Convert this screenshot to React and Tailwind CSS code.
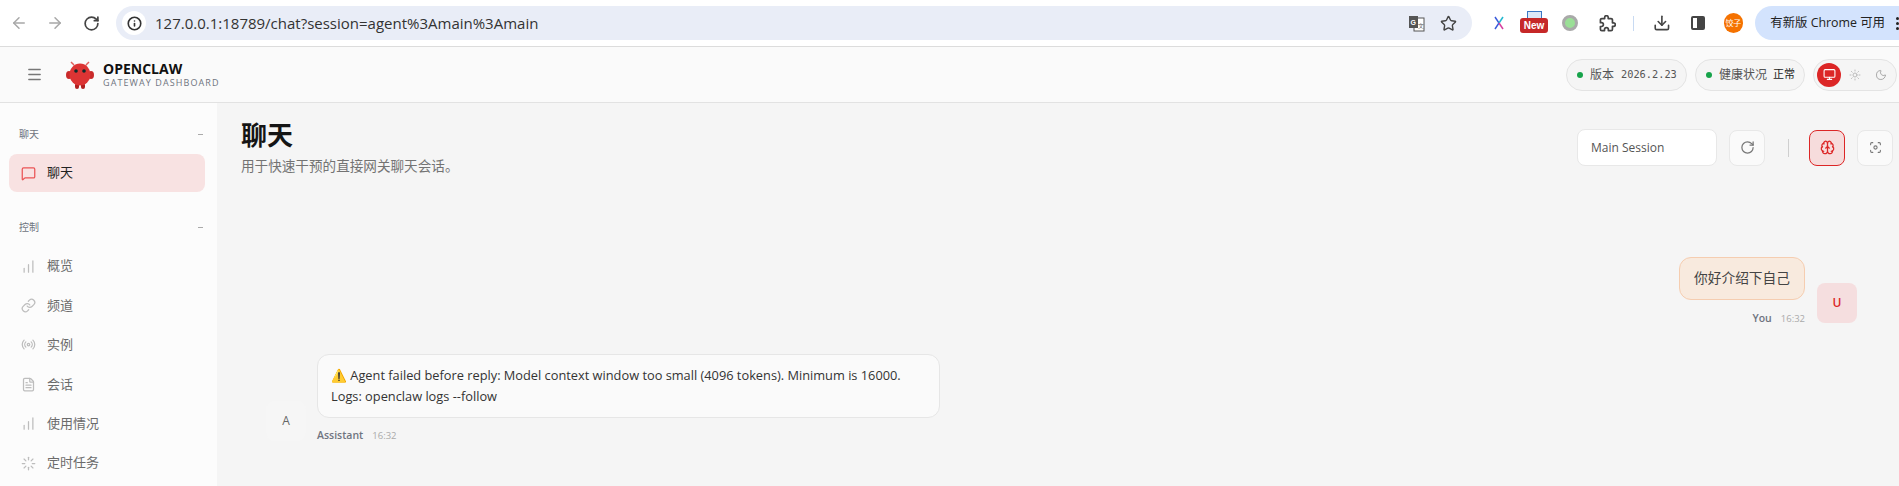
import React from "react";
import {
  ArrowLeft,
  ArrowRight,
  RotateCw,
  Info,
  Star,
  Download,
  Menu,
  MessageSquare,
  ChartNoAxesColumnIncreasing,
  Link,
  Radio,
  FileText,
  Loader,
  Brain,
  Focus,
  Monitor,
  Sun,
  Moon,
} from "lucide-react";

const FONT = "font-['Open_Sans','Noto_Sans_CJK_SC',sans-serif]";

const NAV = [
  { label: "概览", Icon: ChartNoAxesColumnIncreasing },
  { label: "频道", Icon: Link },
  { label: "实例", Icon: Radio },
  { label: "会话", Icon: FileText },
  { label: "使用情况", Icon: ChartNoAxesColumnIncreasing },
  { label: "定时任务", Icon: Loader },
];

const Logo = () => (
  <svg width="30" height="30" viewBox="0 0 30 30">
    <path d="M9 5 L6 2 M21 5 L24 2" stroke="#e0605f" strokeWidth="1.5" fill="none" />
    <ellipse cx="4" cy="15" rx="3" ry="4" fill="#c92a2a" />
    <ellipse cx="26" cy="15" rx="3" ry="4" fill="#c92a2a" />
    <rect x="10" y="23" width="4" height="6" rx="2" fill="#b02020" />
    <rect x="16" y="23" width="4" height="6" rx="2" fill="#b02020" />
    <ellipse cx="15" cy="14.5" rx="10.5" ry="11" fill="#dc3434" />
    <circle cx="11" cy="11" r="1.8" fill="#0b2b2b" />
    <circle cx="19" cy="11" r="1.8" fill="#0b2b2b" />
  </svg>
);

const TranslateIcon = () => (
  <svg width="17" height="17" viewBox="0 0 17 17">
    <rect x="6" y="3" width="10" height="13" fill="#fff" stroke="#555" />
    <path d="M1 1h9v12H1z" fill="#555" />
    <text x="2.5" y="10" fontSize="7" fill="#fff" fontFamily="Liberation Sans" fontWeight="700">G</text>
    <text x="10" y="13" fontSize="6" fill="#555" fontFamily="Liberation Sans">文</text>
  </svg>
);

const ExtX = () => (
  <svg width="14" height="14" viewBox="0 0 14 14">
    <path d="M3 1 L7 7 L3 13" stroke="#3b5bdb" strokeWidth="1.5" fill="none" />
    <path d="M11 1 L7 7" stroke="#22b8cf" strokeWidth="1.5" fill="none" />
    <path d="M7 7 L11 13" stroke="#d6409f" strokeWidth="1.5" fill="none" />
  </svg>
);

const ExtensionIcon = () => (
  <svg width="17" height="17" viewBox="0 0 24 24" fill="none" stroke="#444" strokeWidth="2.4" strokeLinejoin="round">
    <path d="M20.5 11H19V7c0-1.1-.9-2-2-2h-4V3.5C13 2.12 11.88 1 10.5 1S8 2.12 8 3.5V5H4c-1.1 0-1.99.9-1.99 2v3.8H3.5c1.49 0 2.7 1.21 2.7 2.7s-1.21 2.7-2.7 2.7H2V20c0 1.1.9 2 2 2h3.8v-1.5c0-1.49 1.21-2.7 2.7-2.7 1.49 0 2.7 1.21 2.7 2.7V22H17c1.1 0 2-.9 2-2v-4h1.5c1.38 0 2.5-1.12 2.5-2.5S21.88 11 20.5 11z" />
  </svg>
);

const ChromeBar = () => (
  <div className="h-[47px] bg-white border-b border-[#dcdcdc] flex items-center shrink-0">
    <div className="flex items-center pl-[10px] w-[116px] shrink-0">
      <ArrowLeft size={18} className="text-[#a8a8a8]" />
      <ArrowRight size={18} className="text-[#a8a8a8] ml-[18px]" />
      <RotateCw size={17} strokeWidth={2.4} className="text-[#444] ml-[19px]" />
    </div>
    <div className="w-[1356px] h-[34px] rounded-full bg-[#e9edf7] flex items-center pl-[6px] pr-[15px] shrink-0">
      <div className="w-[24px] h-[24px] rounded-full bg-white flex items-center justify-center">
        <Info size={15} strokeWidth={2.6} className="text-[#333]" />
      </div>
      <span className={`ml-[9px] text-[15px] text-[#333] ${FONT} flex-1`}>127.0.0.1:18789/chat?session=agent%3Amain%3Amain</span>
      <TranslateIcon />
      <Star size={17} strokeWidth={2} className="text-[#444] ml-[15px]" />
    </div>
    <div className="ml-[20px] w-[14px] flex justify-center"><ExtX /></div>
    <div className="ml-[14px] w-[28px] h-[24px] flex flex-col items-center">
      <div className="w-[15px] h-[7px] border border-[#3b78c4] border-b-0 bg-[#dce8f7]" />
      <div className="w-[28px] h-[15px] bg-[#c62828] rounded-[3px] text-white text-[10px] leading-[15px] font-bold text-center font-['Liberation_Sans',sans-serif]">New</div>
    </div>
    <div className="ml-[14px] w-[16px] h-[16px] rounded-full bg-[#9adf96] border-[3px] border-[#a9a9a9]" />
    <div className="ml-[21px] flex"><ExtensionIcon /></div>
    <div className="ml-[17px] w-px h-[15px] bg-[#c8daf2]" />
    <Download size={18} strokeWidth={2.2} className="text-[#444] ml-[19px]" />
    <div className="ml-[20px] w-[14px] h-[14px] border-2 border-[#444] rounded-[2px] flex justify-end">
      <div className="w-[6px] bg-[#444]" />
    </div>
    <div className={`ml-[19px] w-[20px] h-[20px] rounded-full bg-[#f57200] text-white text-[8px] leading-[20px] text-center ${FONT}`}>饺子</div>
    <div className={`ml-[12px] flex-1 h-[34px] rounded-l-full bg-[#d3e3fd] flex items-center pl-[15px] text-[12.4px] text-[#222] whitespace-nowrap ${FONT}`}>
      有新版 Chrome 可用
      <span className="ml-[11px] flex flex-col gap-[2px]">
        <span className="w-[3px] h-[3px] rounded-full bg-[#222]" />
        <span className="w-[3px] h-[3px] rounded-full bg-[#222]" />
        <span className="w-[3px] h-[3px] rounded-full bg-[#222]" />
      </span>
    </div>
  </div>
);

const Pill = ({ className, children }) => (
  <div className={`h-[32px] pl-[10px] rounded-full border border-[#e4e4e4] bg-[#f5f5f5] flex items-center gap-[7px] text-[12px] text-[#555] ${className}`}>
    <span className="w-[6px] h-[6px] rounded-full bg-[#16a34a]" />
    {children}
  </div>
);

const AppHeader = () => (
  <div className="h-[56px] bg-[#fafafa] border-b border-[#e2e2e2] flex items-center shrink-0">
    <div className="w-[70px] flex items-center justify-center shrink-0 -mr-[5px] pr-[1px]">
      <Menu size={17} strokeWidth={2} className="text-[#777]" />
    </div>
    <Logo />
    <div className="ml-[8px] flex flex-col">
      <span className="text-[14px] leading-[16px] font-bold text-[#111]">OPENCLAW</span>
      <span className="text-[9px] leading-[12px] tracking-[1.1px] text-[#6f7480]">GATEWAY DASHBOARD</span>
    </div>
    <div className="ml-auto flex items-center gap-[8px] pr-[2px]">
      <Pill className="w-[121px]">
        <span className="flex items-center gap-[7px]">
          <span>版本</span>
          <span className="font-['DejaVu_Sans_Mono',monospace] text-[10.3px]">2026.2.23</span>
        </span>
      </Pill>
      <Pill className="w-[110px]">
        <span className="flex items-center gap-[6px]">
          <span>健康状况</span>
          <span className="text-[#222] text-[11px]">正常</span>
        </span>
      </Pill>
      <div className="h-[32px] w-[84px] rounded-full border border-[#e4e4e4] bg-[#f5f5f5] flex items-center pl-[3px]">
        <div className="w-[24px] h-[24px] rounded-full bg-[#dc2626] flex items-center justify-center">
          <Monitor size={13} className="text-white" />
        </div>
        <Sun size={12} className="text-[#bbb] ml-[8px]" />
        <Moon size={12} className="text-[#aaa] ml-[14px]" />
      </div>
    </div>
  </div>
);

const SectionLabel = ({ children }) => (
  <div className="flex items-center justify-between pl-[19px] pr-[14px] text-[10px] leading-[14px] text-[#6f7480]">
    <span>{children}</span>
    <span className="w-[5px] h-px bg-[#aaa]" />
  </div>
);

const Sidebar = () => (
  <div className="w-[217px] bg-[#fcfcfc] pt-[24px] shrink-0">
    <SectionLabel>聊天</SectionLabel>
    <div className="mt-[13px] ml-[9px] w-[196px] h-[38px] rounded-[8px] bg-[#f8e2e2] flex items-center pl-[12px] text-[13px] text-[#222]">
      <MessageSquare size={15} className="text-[#ea5455]" />
      <span className="ml-[11px]">聊天</span>
    </div>
    <div className="mt-[28px]">
      <SectionLabel>控制</SectionLabel>
    </div>
    <div className="mt-[13px] ml-[9px] flex flex-col gap-[1px]">
      {NAV.map(({ label, Icon }) => (
        <div key={label} className="h-[38.4px] flex items-center pl-[12px] text-[13px] text-[#6b6b6b]">
          <Icon size={15} className="text-[#bdbdbd]" />
          <span className="ml-[11px]">{label}</span>
        </div>
      ))}
    </div>
  </div>
);

const IconButton = ({ children, active }) => (
  <div
    className={`w-[36px] h-[36px] rounded-[8px] border flex items-center justify-center ${
      active ? "border-[#dc2626] bg-[#f6dcdc]" : "border-[#e8e8e8] bg-[#fafafa]"
    }`}
  >
    {children}
  </div>
);

const Main = () => (
  <div className="flex-1 bg-[#f5f5f5] pl-[24px] pr-[6px] pt-[15px] min-w-0">
    <div className="flex items-start justify-between">
      <div>
        <h1 className="text-[26px] leading-[34px] font-bold text-[#151515]">聊天</h1>
        <p className="text-[13.6px] leading-[18px] mt-[5px] text-[#737373]">用于快速干预的直接网关聊天会话。</p>
      </div>
      <div className="flex items-center mt-[11px]">
        <div className="w-[140px] h-[37px] rounded-[8px] border border-[#e8e8e8] bg-white flex items-center pl-[13px] text-[12px] text-[#555]">
          Main Session
        </div>
        <div className="ml-[12px]">
          <IconButton>
            <RotateCw size={15} className="text-[#777]" />
          </IconButton>
        </div>
        <div className="ml-[23px] w-px h-[18px] bg-[#cfcfcf]" />
        <div className="ml-[20px]">
          <IconButton active>
            <Brain size={15} className="text-[#dc2626]" />
          </IconButton>
        </div>
        <div className="ml-[12px]">
          <IconButton>
            <Focus size={13} className="text-[#777]" />
          </IconButton>
        </div>
      </div>
    </div>

    {/* user message */}
    <div className="mt-[82px] flex justify-end items-end gap-[12px] pr-[36px]">
      <div className="flex flex-col items-end">
        <div className="w-[126px] h-[43px] rounded-[12px] border border-[#f5cdb0] bg-[#f8eade] flex items-center justify-center text-[13.7px] text-[#444]">
          你好介绍下自己
        </div>
        <div className="mt-[12px] flex items-center gap-[9px] leading-[13px]">
          <span className="text-[10.5px] font-semibold text-[#6f7480]">You</span>
          <span className="text-[9.5px] text-[#aaa]">16:32</span>
        </div>
      </div>
      <div className="w-[40px] h-[40px] mb-[2px] rounded-[8px] bg-[#f5dedf] flex items-center justify-center text-[12px] text-[#dc2626] font-semibold">
        U
      </div>
    </div>

    {/* assistant message */}
    <div className="mt-[29px] ml-[25px] flex items-end gap-[11px]">
      <div className="w-[40px] h-[40px] mb-[1px] rounded-[8px] bg-[#f6f6f6] flex items-center justify-center text-[12px] text-[#666] font-medium">
        A
      </div>
      <div className="flex flex-col">
        <div className="w-[623px] h-[64px] px-[13px] rounded-[12px] border border-[#e6e6e6] bg-[#fafafa] flex flex-col justify-center text-[12.8px] leading-[21px] text-[#333]">
          <p>⚠️ Agent failed before reply: Model context window too small (4096 tokens). Minimum is 16000.</p>
          <p>Logs: openclaw logs --follow</p>
        </div>
        <div className="mt-[11px] flex items-center gap-[9px] leading-[13px]">
          <span className="text-[10.5px] font-semibold text-[#6f7480]">Assistant</span>
          <span className="text-[9.5px] text-[#aaa]">16:32</span>
        </div>
      </div>
    </div>
  </div>
);

export default function App() {
  return (
    <div className={`h-[486px] w-[1899px] overflow-hidden flex flex-col ${FONT}`}>
      <ChromeBar />
      <AppHeader />
      <div className="flex flex-1 min-h-0">
        <Sidebar />
        <Main />
      </div>
    </div>
  );
}
